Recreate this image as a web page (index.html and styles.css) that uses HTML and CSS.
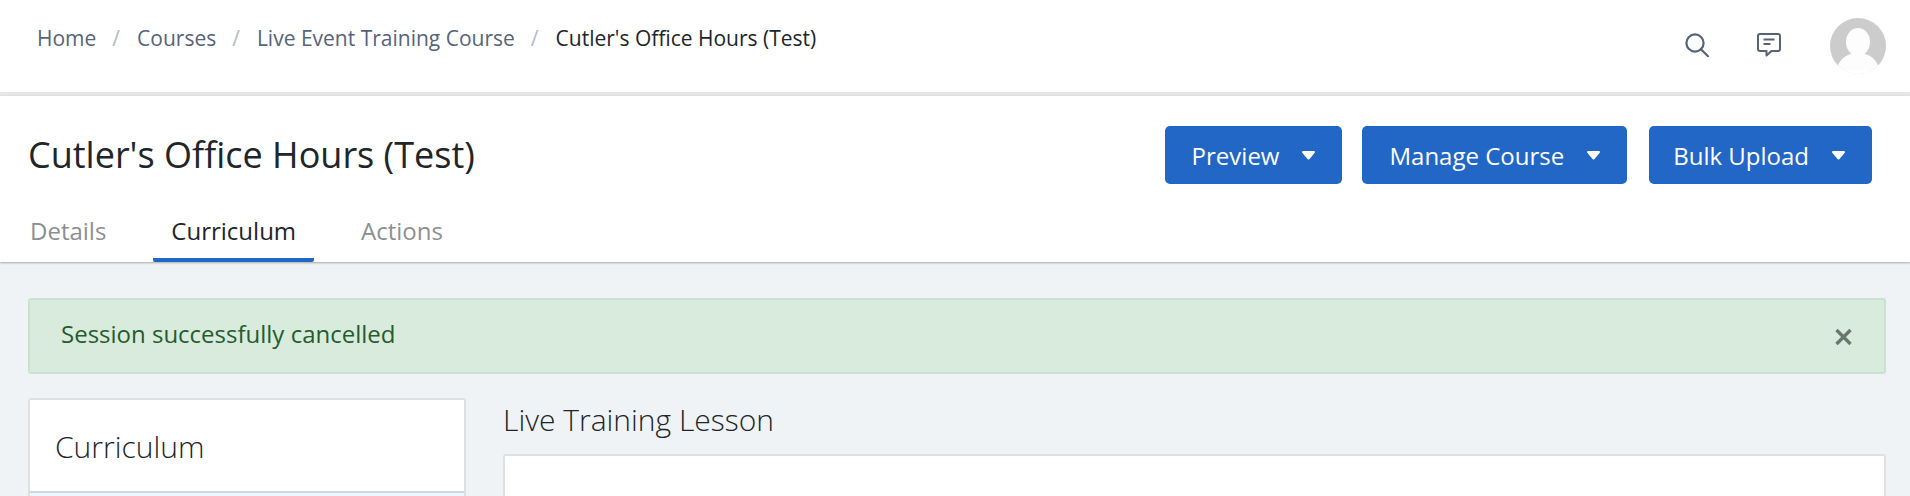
FILE: index.html
```html
<!DOCTYPE html>
<html lang="en">
<head>
    <meta charset="UTF-8">
    <title>Cutler's Office Hours (Test)</title>
    <link rel="stylesheet" href="styles.css">
</head>
<body>
    <div class="topbar">
        <ol class="breadcrumb">
            <li><a href="#">Home</a></li>
            <li class="sep">/</li>
            <li><a href="#">Courses</a></li>
            <li class="sep">/</li>
            <li><a href="#">Live Event Training Course</a></li>
            <li class="sep">/</li>
            <li class="current">Cutler's Office Hours (Test)</li>
        </ol>
        <div class="topbar-icons">
            <svg class="icon-search" width="24" height="24" viewBox="0 0 24 24" fill="none" stroke="#56637a" stroke-width="2.2" stroke-linecap="round">
                <circle cx="10" cy="10" r="8.6"/>
                <path d="M16 16.2l7 7"/>
            </svg>
            <svg class="icon-chat" width="24" height="24" viewBox="0 0 24 24" fill="none" stroke="#56637a" stroke-width="2" stroke-linejoin="round">
                <path d="M3 1h18a2 2 0 0 1 2 2v13a2 2 0 0 1-2 2h-6.500l-5 4.500v-4.500h-6.500a2 2 0 0 1-2-2v-13a2 2 0 0 1 2-2z"/>
                <path d="M6.500 6.500h11M6.500 11h7"/>
            </svg>
            <svg class="avatar" width="56" height="56" viewBox="0 0 56 56">
                <defs><clipPath id="round"><circle cx="28" cy="28" r="28"/></clipPath></defs>
                <g clip-path="url(#round)">
                    <rect width="56" height="56" fill="#cccccc"/>
                    <ellipse cx="28" cy="24" rx="12" ry="14" fill="#fdfdfd"/>
                    <path d="M6 56c1-14 10-21 22-21s21 7 22 21z" fill="#fdfdfd"/>
                    <rect y="52" width="56" height="4" fill="#ffffff"/>
                </g>
            </svg>
        </div>
    </div>

    <div class="page-header">
        <div class="title-row">
            <h1>Cutler's Office Hours (Test)</h1>
            <div class="actions">
                <button class="btn">Preview<svg class="caret" width="15" height="10" viewBox="0 0 15 10"><path d="M2 2h11l-5.500 6.500z" fill="#fff" stroke="#fff" stroke-width="2" stroke-linejoin="round"/></svg></button>
                <button class="btn">Manage Course<svg class="caret" width="15" height="10" viewBox="0 0 15 10"><path d="M2 2h11l-5.500 6.500z" fill="#fff" stroke="#fff" stroke-width="2" stroke-linejoin="round"/></svg></button>
                <button class="btn btn-upload">Bulk Upload<svg class="caret" width="15" height="10" viewBox="0 0 15 10"><path d="M2 2h11l-5.500 6.500z" fill="#fff" stroke="#fff" stroke-width="2" stroke-linejoin="round"/></svg></button>
            </div>
        </div>
        <div class="tabs">
            <a href="#" class="tab">Details</a>
            <a href="#" class="tab active">Curriculum</a>
            <a href="#" class="tab">Actions</a>
        </div>
    </div>

    <div class="content">
        <div class="alert">
            <span>Session successfully cancelled</span>
            <svg class="alert-close" width="17" height="18" viewBox="0 0 17 18" stroke="#6b766e" stroke-width="3.400">
                <path d="M1.500 2l14 14M15.500 2l-14 14"/>
            </svg>
        </div>
        <div class="columns">
            <div class="sidebar">
                <div class="sidebar-title">Curriculum</div>
                <div class="sidebar-item"></div>
            </div>
            <div class="main">
                <h3>Live Training Lesson</h3>
                <div class="lesson-card"></div>
            </div>
        </div>
    </div>
</body>
</html>
```

FILE: styles.css
```css
* {
    box-sizing: border-box;
    margin: 0;
    padding: 0;
}

html, body {
    height: 496px;
    overflow: hidden;
}

body {
    background-color: #eff3f6;
    color: #212529;
    font-family: 'Open Sans', sans-serif;
}

a {
    text-decoration: none;
}

.topbar {
    height: 96px;
    background: white;
    border-bottom: 4px solid #e6e6e6;
    display: flex;
    justify-content: space-between;
    padding: 0 24px 0 37px;
}

.breadcrumb {
    display: flex;
    list-style: none;
    font-size: 21px;
    line-height: 28px;
    padding-top: 24px;
}

.breadcrumb a {
    color: #56637a;
}

.breadcrumb .sep {
    color: #b4bac4;
    margin: 0 17px 0 16px;
}

.breadcrumb .current {
    color: #212529;
}

.topbar-icons {
    display: flex;
    align-items: flex-start;
}

.icon-search {
    margin-top: 33px;
}

.icon-chat {
    margin: 33px 0 0 48px;
}

.avatar {
    margin: 18px 0 0 49px;
}

.page-header {
    height: 166px;
    background: white;
    box-shadow: 0 1px 2px rgba(0, 0, 0, 0.3);
    padding: 30px 38px 0 28px;
    position: relative;
}

.title-row {
    display: flex;
    justify-content: space-between;
    align-items: center;
    height: 58px;
}

h1 {
    font-size: 36px;
    font-weight: 400;
    line-height: 56px;
}

.actions {
    display: flex;
    gap: 20px;
}

.btn {
    height: 58px;
    padding: 0 26px 0 27px;
    background-color: #2267c6;
    color: white;
    border: none;
    border-radius: 5px;
    font-family: 'Open Sans', sans-serif;
    font-size: 24px;
    display: flex;
    align-items: center;
}

.btn-upload {
    padding-left: 24px;
    margin-left: 2px;
}

.caret {
    margin-left: 22px;
}

.tabs {
    display: flex;
    margin: 20px 0 0 -16px;
}

.tab {
    height: 58px;
    line-height: 54px;
    padding: 0 18px;
    margin-right: 29px;
    font-size: 24px;
    color: #8c8f92;
}

.tab.active {
    color: #212529;
    border-bottom: 4px solid #2267c6;
    border-radius: 2px;
}

.content {
    padding: 36px 24px 0 28px;
}

.alert {
    height: 76px;
    background-color: #d9ebdd;
    border: 2px solid #c8e2ce;
    border-radius: 3px;
    color: #255b2f;
    font-size: 24px;
    line-height: 68px;
    display: flex;
    justify-content: space-between;
    align-items: flex-start;
    padding: 0 32px 0 31px;
}

.alert-close {
    margin-top: 28px;
}

.columns {
    display: flex;
    gap: 37px;
    margin-top: 24px;
}

.sidebar {
    width: 438px;
    height: 98px;
    flex-shrink: 0;
    background: white;
    border: 2px solid #e0e0e0;
    border-bottom: none;
    border-radius: 3px 3px 0 0;
}

.sidebar-title {
    height: 93px;
    line-height: 94px;
    padding-left: 25px;
    font-size: 30px;
    font-weight: 300;
    border-bottom: 2px solid #c9d9e3;
}

.sidebar-item {
    height: 3px;
    background-color: #eef6fb;
}

.main {
    flex: 1;
}

h3 {
    height: 56px;
    line-height: 44px;
    font-size: 30px;
    font-weight: 300;
}

.lesson-card {
    height: 42px;
    background: white;
    border: 2px solid #e0e0e0;
    border-bottom: none;
    border-radius: 3px 3px 0 0;
}
```
